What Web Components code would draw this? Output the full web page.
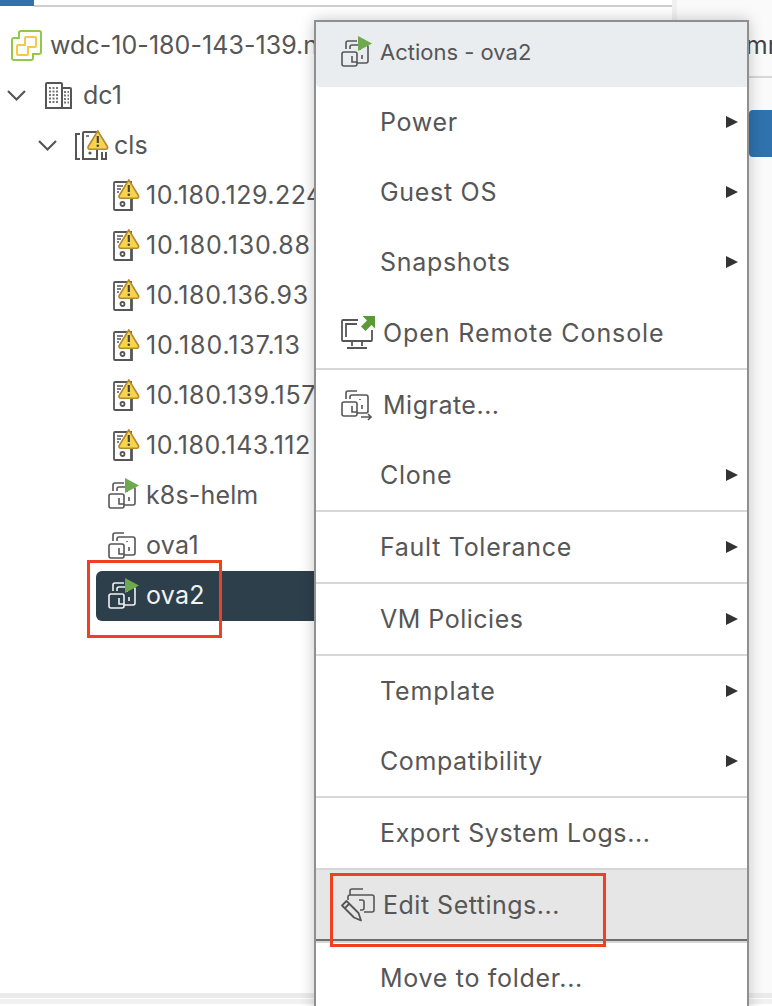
<!DOCTYPE html>
<html><head><meta charset="utf-8">
<style>
html,body{margin:0;padding:0;width:772px;height:1006px;overflow:hidden;background:#fff;font-family:Inter,"Liberation Sans",sans-serif;color:#565656}
</style></head><body>
<vc-app></vc-app>
<script>
const VM=(c='currentColor')=>`<g fill="none" stroke="${c}" stroke-width="1.6"><rect x="1" y="12" width="15" height="14" rx="2"/><path d="M5 9V3a2 2 0 0 1 2-2h9M9 9V7a2 2 0 0 1 2-2h14a2 2 0 0 1 2 2v14a2 2 0 0 1-2 2h-9M11 16v6h5M19 9v1M21 15v4"/></g>`;
const TRI=`<path d="M17 -4v15l14-7.500z" fill="#6ea84f"/>`;
const WARN=(x,y)=>`<g transform="translate(${x} ${y}) scale(1.08)"><path d="M10 1.200 19 16a1.600 1.600 0 0 1-1.400 2.300H2.400A1.600 1.600 0 0 1 1 16z" fill="#f6d44e" stroke="#b58a2c" stroke-width="1.500" stroke-linejoin="round"/><path d="M10 6v6.500" stroke="#444" stroke-width="2"/><circle cx="10" cy="15" r="1.200" fill="#444"/></g>`;
const ICONS={
logo:[31,31,`<path d="M8 8V3a2 2 0 0 1 2-2h18a2 2 0 0 1 2 2v19a2 2 0 0 1-2 2h-6v4a2 2 0 0 1-2 2H3a2 2 0 0 1-2-2V10a2 2 0 0 1 2-2z" fill="none" stroke="#93c74b" stroke-width="2"/><path d="M15 7h9a1 1 0 0 1 1 1v8a1 1 0 0 1-1 1h-7v7a1 1 0 0 1-1 1H7a1 1 0 0 1-1-1v-8a1 1 0 0 1 1-1h7V8a1 1 0 0 1 1-1z" fill="none" stroke="#f5c945" stroke-width="2"/>`],
dc:[28,29,`<g fill="none" stroke="currentColor" stroke-width="2"><path d="M1 27V3a1 1 0 0 1 1-1h14a1 1 0 0 1 1 1v24zM17 7h8a1 1 0 0 1 1 1v19h-9"/></g><path d="M4 7h10M4 10.500h10M4 14h10M4 17.500h10M4 21h10M19 11h5M19 14.500h5M19 18h5M19 21.500h5" stroke="#777" stroke-width="2" stroke-dasharray="2 1.500"/>`],
cluster:[33,31,`<g fill="none" stroke="currentColor" stroke-width="2"><path d="M5 4H1v25h4M27 22v7h4v-7"/><path d="M8 29V3a1 1 0 0 1 1-1h13v27zM22 22v7"/></g><circle cx="15" cy="23" r="1.600" fill="currentColor"/><path d="M11 6h3" stroke="currentColor" stroke-width="1.500"/>${WARN(12,-.5)}`],
host:[26,32,`<g fill="none" stroke="currentColor" stroke-width="1.800"><path d="M2 4a1 1 0 0 1 1-1h16v27a1 1 0 0 1-1 1H3a1 1 0 0 1-1-1zM20 18v13H3"/><circle cx="10.500" cy="25" r="2"/><path d="M5 7h6M5 10h4M5 13h2" stroke-width="1.400"/></g>${WARN(6,-.5)}`],
vm:[31,27,VM()],
vmrun:[31,27,VM()+TRI],
vmrunl:[31,27,VM('#f2f2f2')+TRI],
console:[34,33,`<g fill="none" stroke="currentColor" stroke-width="1.800"><path d="M17 4H2a1 1 0 0 0-1 1v19a1 1 0 0 0 1 1h28a1 1 0 0 0 1-1V14M5 21V8h11M11 25v5M21 25v5M6 32h20"/></g><path d="M21.500 0H34v12.500l-3.500-3.500-6 6-4.500-4.500 6-6z" fill="#5c9a35"/>`],
migrate:[32,30,VM()+`<path d="M20 27h10m-3-3 3 3-3 3" fill="none" stroke="currentColor" stroke-width="1.600"/>`],
edit:[33,34,`<g fill="none" stroke="currentColor" stroke-width="1.600"><path d="M9 7V3a2 2 0 0 1 2-2h11M7 12V9a2 2 0 0 1 2-2h22a2 2 0 0 1 2 2v13a2 2 0 0 1-2 2h-8"/><path d="M18 12h3a2 2 0 0 1 2 2v6a2 2 0 0 1-2 2h-2"/></g><path d="M1 17.500 5.500 13l12 12 2.500 7.500-7-3zM3.500 20.500l4.500-4.500" fill="#e6e6e6" stroke="currentColor" stroke-width="1.800" stroke-linejoin="round"/>`]
};
class VcIcon extends HTMLElement{constructor(){super();this.attachShadow({mode:'open'})}
connectedCallback(){const [w,h,b]=ICONS[this.getAttribute('name')];this.shadowRoot.innerHTML=`<style>:host{display:block;flex:none;width:${w}px;height:${h}px;line-height:0}svg{display:block;overflow:visible}</style><svg width="${w}" height="${h}" viewBox="0 0 ${w} ${h}">${b}</svg>`}}
customElements.define('vc-icon',VcIcon);

class VcTreeNode extends HTMLElement{constructor(){super();this.attachShadow({mode:'open'})}
connectedCallback(){const pad=this.getAttribute('pad')||0,gap=this.getAttribute('gap')||6,sel=this.hasAttribute('selected'),ch=this.getAttribute('chev'),ls=this.getAttribute('ls')||'.05';
this.shadowRoot.innerHTML=`<style>:host{display:flex;align-items:center;box-sizing:border-box;height:50px;padding-left:${pad}px;white-space:nowrap;font-size:25px;letter-spacing:${ls}px;${sel?'margin-top:1px;padding:0 0 2px 12px;margin-left:96px;background:#2e3f4c;color:#f2f2f2;border-radius:6px 0 0 6px;':''}}
.row{display:flex;align-items:center;gap:${gap}px}
svg{flex:none;display:block}</style><div class="row">${ch?`<svg width="22" height="14" viewBox="0 0 22 14" style="margin-right:${ch}px"><path d="M2 3l8.500 8.500L19 3" fill="none" stroke="#565656" stroke-width="2.200"/></svg>`:''}<slot name="icon"></slot><span><slot></slot></span></div>`}}
customElements.define('vc-tree-node',VcTreeNode);

class VcMenuItem extends HTMLElement{constructor(){super();this.attachShadow({mode:'open'})}
connectedCallback(){const h=this.hasAttribute('icon');const arrow=this.hasAttribute('arrow'),act=this.hasAttribute('active');
this.shadowRoot.innerHTML=`<style>:host{display:flex;align-items:center;height:${this.getAttribute('h')||70}px;box-sizing:border-box;padding:${this.getAttribute('pt')||0}px 9px 0 ${h?25:64}px;font-size:25px;letter-spacing:${this.getAttribute('ls')||'.7'}px;white-space:nowrap;${act?'background:#e6e6e6;':''}}
.i{display:${h?'block':'none'};width:34px;flex:none}
.t{flex:1;padding-left:${h?8:0}px}
.a{width:0;height:0;border-left:12px solid #333;border-top:6.500px solid transparent;border-bottom:6.500px solid transparent}</style><span class="i"><slot name="icon"></slot></span><span class="t"><slot></slot></span>${arrow?'<span class="a"></span>':''}`}}
customElements.define('vc-menu-item',VcMenuItem);

class VcSep extends HTMLElement{constructor(){super();this.attachShadow({mode:'open'})}
connectedCallback(){const d=this.hasAttribute('dark');this.shadowRoot.innerHTML=`<style>:host{display:block;height:2px;background:${d?'#6e6e6e':'#d7d7d7'}}</style>`}}
customElements.define('vc-sep',VcSep);

class VcMenu extends HTMLElement{constructor(){super();const s=this.attachShadow({mode:'open'});
s.innerHTML=`<style>:host{position:absolute;left:314px;top:20px;width:435px;height:1000px;box-sizing:border-box;border:2px solid #8f8f8f;background:#fff;box-shadow:0 0 14px rgba(0,0,0,.22);color:#565656;overflow:hidden;display:block}
.head{display:flex;align-items:center;gap:8px;height:65px;box-sizing:border-box;padding:0 0 2px 25px;background:#e9edf0;font-size:22px;border-radius:0 0 0 4px}
.head span{position:relative;top:-2px}
</style><div class="head"><vc-icon name="vmrun"></vc-icon><span>Actions - ova2</span></div><slot></slot>`}}
customElements.define('vc-menu',VcMenu);

class VcMark extends HTMLElement{constructor(){super();this.attachShadow({mode:'open'}).innerHTML=`<style>:host{position:absolute;box-sizing:border-box;border:3px solid #ee4023;display:block;pointer-events:none}</style>`}}
customElements.define('vc-mark',VcMark);

class VcApp extends HTMLElement{constructor(){super();const s=this.attachShadow({mode:'open'});
s.innerHTML=`<style>
:host{display:grid;grid-template-columns:672px 5px 95px;grid-template-rows:1fr 13px;width:772px;height:1006px;position:relative;overflow:hidden;background:#fff}
.left{display:flex;flex-direction:column;overflow:hidden;min-width:0}
.tabs{display:flex;height:7px;flex:none}
.tabs i{width:34px;height:6px;background:#2f72ad}.tabs b{flex:1;border-bottom:2px solid #cfcfcf;height:5px}
.tree{flex:1;padding-top:13px}
.foot{grid-column:1/-1;display:flex;flex-direction:column;gap:1px}
.foot i{display:block;height:5px;background:#ebebeb}.foot i+i{background:#f1f1f1}
.band{background:#f1f1f1}
.right{background:#fafafa;padding:30px 0 0 38px;overflow:hidden;white-space:nowrap;font-size:25px;color:#444}
.line{height:2px;background:#d7d7d7;margin:16px 0 32px -38px}
.btn{width:60px;height:47px;margin-left:34px;background:#2f72ad;border-radius:4px}
.tt{display:block;height:30px;line-height:30px}
</style>
<div class="left"><div class="tabs"><i></i><b></b></div><div class="tree"><slot></slot></div></div>
<div class="band"></div>
<div class="right"><span class="tt">Summary</span><div class="line"></div><div class="btn"></div></div>
<div class="foot"><i></i><i></i></div>
<slot name="over"></slot>`}}
customElements.define('vc-app',VcApp);

document.querySelector('vc-app').innerHTML=`
<vc-tree-node pad="11" gap="8"><vc-icon slot="icon" name="logo"></vc-icon>wdc-10-180-143-139.nsx</vc-tree-node>
<vc-tree-node pad="6" gap="10" chev="7"><vc-icon slot="icon" name="dc"></vc-icon>dc1</vc-tree-node>
<vc-tree-node pad="37" gap="6" chev="10"><vc-icon slot="icon" name="cluster"></vc-icon>cls</vc-tree-node>
${[['10.180.129.224','.48'],['10.180.130.88','.8'],['10.180.136.93','.65'],['10.180.137.13','.88'],['10.180.139.157','.63'],['10.180.143.112','.48']].map(([t,l])=>`<vc-tree-node pad="112" gap="8" ls="${l}"><vc-icon slot="icon" name="host"></vc-icon>${t}</vc-tree-node>`).join('')}
<vc-tree-node pad="108" gap="7" ls=".15"><vc-icon slot="icon" name="vmrun"></vc-icon>k8s-helm</vc-tree-node>
<vc-tree-node pad="108" gap="7" ls=".3"><vc-icon slot="icon" name="vm"></vc-icon>ova1</vc-tree-node>
<vc-tree-node selected gap="7" ls=".3"><vc-icon slot="icon" name="vmrunl"></vc-icon>ova2</vc-tree-node>
<vc-menu slot="over">
<vc-menu-item arrow>Power</vc-menu-item>
<vc-menu-item arrow>Guest OS</vc-menu-item>
<vc-menu-item arrow>Snapshots</vc-menu-item>
<vc-menu-item icon h="71" ls=".9"><vc-icon slot="icon" name="console"></vc-icon>Open Remote Console</vc-menu-item>
<vc-sep></vc-sep>
<vc-menu-item icon ls=".5"><vc-icon slot="icon" name="migrate"></vc-icon>Migrate...</vc-menu-item>
<vc-menu-item arrow>Clone</vc-menu-item>
<vc-sep></vc-sep>
<vc-menu-item arrow>Fault Tolerance</vc-menu-item>
<vc-sep></vc-sep>
<vc-menu-item arrow ls=".5">VM Policies</vc-menu-item>
<vc-sep></vc-sep>
<vc-menu-item arrow ls=".9">Template</vc-menu-item>
<vc-menu-item arrow ls=".6">Compatibility</vc-menu-item>
<vc-sep></vc-sep>
<vc-menu-item ls=".6">Export System Logs...</vc-menu-item>
<vc-sep></vc-sep>
<vc-menu-item icon active h="69" pt="1" ls=".5"><vc-icon slot="icon" name="edit"></vc-icon>Edit Settings...</vc-menu-item>
<vc-sep dark></vc-sep>
<vc-sep></vc-sep>
<vc-menu-item>Move to folder...</vc-menu-item>
</vc-menu>
<vc-mark slot="over" style="left:87px;top:560px;width:135px;height:78px"></vc-mark>
<vc-mark slot="over" style="left:330px;top:873px;width:276px;height:74px"></vc-mark>`;
</script></body></html>
